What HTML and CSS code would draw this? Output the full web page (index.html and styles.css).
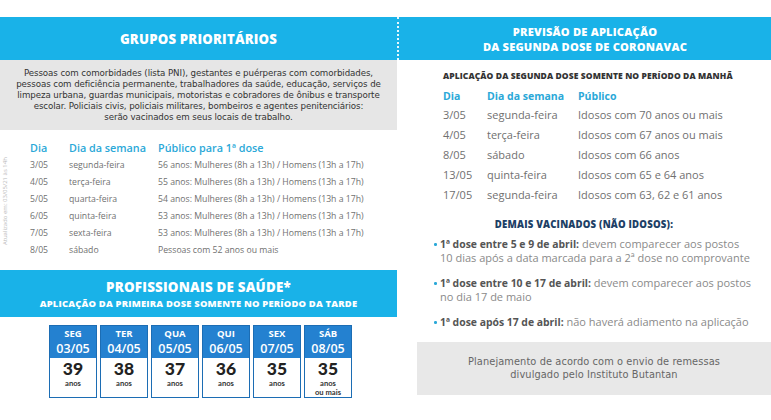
FILE: index.html
```html
<!DOCTYPE html>
<html lang="pt-BR">
<head>
<meta charset="utf-8">
<title>Vacinação</title>
<link rel="stylesheet" href="styles.css">
</head>
<body>
<div class="page">
  <section class="col-left">
    <header class="band band-top">
      <h1 class="band-title">GRUPOS PRIORITÁRIOS</h1>
    </header>
    <div class="intro">
      <p>Pessoas com comorbidades (lista PNI), gestantes e puérperas com comorbidades,<br>
      pessoas com deficiência permanente, trabalhadores da saúde, educação, serviços de<br>
      limpeza urbana, guardas municipais, motoristas e cobradores de ônibus e transporte<br>
      escolar. Policiais civis, policiais militares, bombeiros e agentes penitenciários:<br>
      serão vacinados em seus locais de trabalho.</p>
    </div>
    <div class="sched">
      <div class="side-note">Atualizado em: 03/05/21 às 14h</div>
      <div class="tbl tbl-left">
        <div class="th">Dia</div><div class="th">Dia da semana</div><div class="th">Público para 1ª dose</div>
        <div>3/05</div><div>segunda-feira</div><div>56 anos: Mulheres (8h a 13h) / Homens (13h a 17h)</div>
        <div>4/05</div><div>terça-feira</div><div>55 anos: Mulheres (8h a 13h) / Homens (13h a 17h)</div>
        <div>5/05</div><div>quarta-feira</div><div>54 anos: Mulheres (8h a 13h) / Homens (13h a 17h)</div>
        <div>6/05</div><div>quinta-feira</div><div>53 anos: Mulheres (8h a 13h) / Homens (13h a 17h)</div>
        <div>7/05</div><div>sexta-feira</div><div>53 anos: Mulheres (8h a 13h) / Homens (13h a 17h)</div>
        <div>8/05</div><div>sábado</div><div>Pessoas com 52 anos ou mais</div>
      </div>
    </div>
    <header class="band band-prof">
      <h2 class="prof-title">PROFISSIONAIS DE SAÚDE*</h2>
      <p class="prof-sub">APLICAÇÃO DA PRIMEIRA DOSE SOMENTE NO PERÍODO DA TARDE</p>
    </header>
    <div class="cards">
      <div class="card"><div class="card-top"><span class="wd">SEG</span><span class="dt">03/05</span></div><div class="card-bot"><span class="age">39</span><span class="an">anos</span></div></div>
      <div class="card"><div class="card-top"><span class="wd">TER</span><span class="dt">04/05</span></div><div class="card-bot"><span class="age">38</span><span class="an">anos</span></div></div>
      <div class="card"><div class="card-top"><span class="wd">QUA</span><span class="dt">05/05</span></div><div class="card-bot"><span class="age">37</span><span class="an">anos</span></div></div>
      <div class="card"><div class="card-top"><span class="wd">QUI</span><span class="dt">06/05</span></div><div class="card-bot"><span class="age">36</span><span class="an">anos</span></div></div>
      <div class="card"><div class="card-top"><span class="wd">SEX</span><span class="dt">07/05</span></div><div class="card-bot"><span class="age">35</span><span class="an">anos</span></div></div>
      <div class="card"><div class="card-top"><span class="wd">SÁB</span><span class="dt">08/05</span></div><div class="card-bot"><span class="age">35</span><span class="an">anos<br>ou mais</span></div></div>
    </div>
  </section>

  <section class="col-right">
    <header class="band band-top band-right">
      <h1 class="band-title two">PREVISÃO DE APLICAÇÃO<br>DA SEGUNDA DOSE DE CORONAVAC</h1>
    </header>
    <div class="right-body">
      <p class="r-sub">APLICAÇÃO DA SEGUNDA DOSE SOMENTE NO PERÍODO DA MANHÃ</p>
      <div class="tbl tbl-right">
        <div class="th">Dia</div><div class="th">Dia da semana</div><div class="th">Público</div>
        <div>3/05</div><div>segunda-feira</div><div>Idosos com 70 anos ou mais</div>
        <div>4/05</div><div>terça-feira</div><div>Idosos com 67 anos ou mais</div>
        <div>8/05</div><div>sábado</div><div>Idosos com 66 anos</div>
        <div>13/05</div><div>quinta-feira</div><div>Idosos com 65 e 64 anos</div>
        <div>17/05</div><div>segunda-feira</div><div>Idosos com 63, 62 e 61 anos</div>
      </div>
      <h3 class="demais">DEMAIS VACINADOS (NÃO IDOSOS):</h3>
      <ul class="bullets">
        <li><b>1ª dose entre 5 e 9 de abril:</b> devem comparecer aos postos<br>10 dias após a data marcada para a 2ª dose no comprovante</li>
        <li><b>1ª dose entre 10 e 17 de abril:</b> devem comparecer aos postos<br>no dia 17 de maio</li>
        <li><b>1ª dose após 17 de abril:</b> não haverá adiamento na aplicação</li>
      </ul>
    </div>
    <div class="footer-box">
      <p>Planejamento de acordo com o envio de remessas<br>divulgado pelo Instituto Butantan</p>
    </div>
  </section>
</div>
</body>
</html>
```

FILE: styles.css
```css
* { box-sizing: border-box; }
html, body { margin: 0; padding: 0; }
body {
  width: 771px;
  height: 420px;
  overflow: hidden;
  background: #ffffff;
  font-family: "Open Sans", "Liberation Sans", sans-serif;
}
p, h1, h2, h3, ul { margin: 0; padding: 0; }

.page {
  display: grid;
  grid-template-columns: 397px 1fr;
  padding-top: 17px;
}

.band {
  background: #19b2e8;
  color: #ffffff;
  text-align: center;
}
.band-top {
  height: 43px;
  display: flex;
  align-items: center;
  justify-content: center;
}
.band-title {
  font-size: 13.2px;
  font-weight: 800;
  letter-spacing: 0.2px;
}
.band-title.two {
  font-size: 11.1px;
  line-height: 15px;
  letter-spacing: 0.2px;
}
.band-right {
  border-left: 2px dotted rgba(255,255,255,0.9);
}
.col-right { display: flex; flex-direction: column; }

.intro {
  background: #e6e6e6;
  height: 70px;
  display: flex;
  align-items: center;
  justify-content: center;
  text-align: center;
  padding-top: 1px;
}
.intro p {
  font-family: "DejaVu Sans", "Open Sans", sans-serif;
  font-size: 8.7px;
  line-height: 10.9px;
  color: #333333;
  letter-spacing: -0.1px;
}

.sched {
  display: flex;
  height: 130px;
  align-items: flex-start;
}
.side-note {
  writing-mode: vertical-rl;
  transform: rotate(180deg);
  font-size: 6px;
  color: #b9b9b9;
  width: 14px;
  margin-top: 20px;
  margin-left: 1px;
  text-align: center;
  height: 102px;
}

.tbl { display: grid; color: #707070; }
.tbl .th { color: #2aa8d8; font-weight: 600; }

.tbl-left {
  grid-template-columns: 39px 89px auto;
  grid-auto-rows: 17px;
  align-items: center;
  font-size: 8.7px;
  margin-left: 15px;
  margin-top: 9px;
}
.tbl-left .th { font-size: 10.8px; }

.band-prof {
  margin-top: 10px;
  height: 47px;
  display: flex;
  flex-direction: column;
  align-items: center;
  justify-content: center;
}
.prof-title {
  font-size: 13.4px;
  font-weight: 800;
  line-height: 18px;
  margin-bottom: 1px;
  letter-spacing: 0.2px;
}
.prof-sub {
  font-size: 9.4px;
  font-weight: 800;
  line-height: 13px;
  letter-spacing: 0.2px;
}

.cards {
  display: flex;
  gap: 3px;
  padding-left: 49px;
  margin-top: 8px;
}
.card {
  width: 48px;
  height: 73px;
  border: 1.5px solid #1c6db4;
  display: flex;
  flex-direction: column;
  background: #ffffff;
}
.card-top {
  background: #2481d0;
  color: #ffffff;
  height: 32px;
  display: flex;
  flex-direction: column;
  align-items: center;
  justify-content: center;
}
.wd { font-size: 9.5px; font-weight: 700; line-height: 13px; }
.dt { font-size: 12.5px; font-weight: 600; line-height: 17px; }
.card-bot {
  flex: 1;
  display: flex;
  flex-direction: column;
  align-items: center;
  color: #222222;
  font-family: "Lato", "Open Sans", sans-serif;
}
.age { font-size: 17.5px; font-weight: 900; line-height: 21px; }
.an { font-size: 7.6px; font-weight: 700; line-height: 8.5px; text-align: center; color: #333; }

.right-body {
  padding-left: 46px;
}
.r-sub {
  font-size: 8.5px;
  font-weight: 800;
  color: #333333;
  margin-top: 11px;
  line-height: 10px;
  letter-spacing: 0.1px;
}
.tbl-right {
  grid-template-columns: 44px 91px auto;
  grid-template-rows: 16px;
  grid-auto-rows: 20px;
  align-items: center;
  font-size: 11px;
  margin-top: 7px;
}
.tbl-right .th { font-size: 10.5px; font-weight: 700; }

.demais {
  font-size: 9.6px;
  font-weight: 800;
  line-height: 13px;
  color: #1d3f66;
  text-align: center;
  margin-top: 14px;
  margin-left: -46px;
  letter-spacing: 0.2px;
}
.bullets {
  list-style: none;
  margin-top: 6px;
  margin-left: -10px;
  font-size: 11px;
  line-height: 14px;
  color: #8a8a8a;
}
.bullets li {
  position: relative;
  padding-left: 7px;
  margin-bottom: 11px;
}
.bullets li::before {
  content: "";
  position: absolute;
  left: 1px;
  top: 6px;
  width: 2.5px;
  height: 2.5px;
  border-radius: 50%;
  background: #2aa8d8;
}
.bullets b { color: #555555; font-weight: 700; font-size: 10.4px; }

.footer-box {
  margin-left: 20px;
  margin-top: 2px;
  height: 53px;
  background: #e8e8e8;
  display: flex;
  align-items: center;
  justify-content: center;
  text-align: center;
}
.footer-box p {
  font-family: "DejaVu Sans", "Open Sans", sans-serif;
  font-size: 9.8px;
  line-height: 12.2px;
  letter-spacing: 0.1px;
  color: #666666;
}
```
